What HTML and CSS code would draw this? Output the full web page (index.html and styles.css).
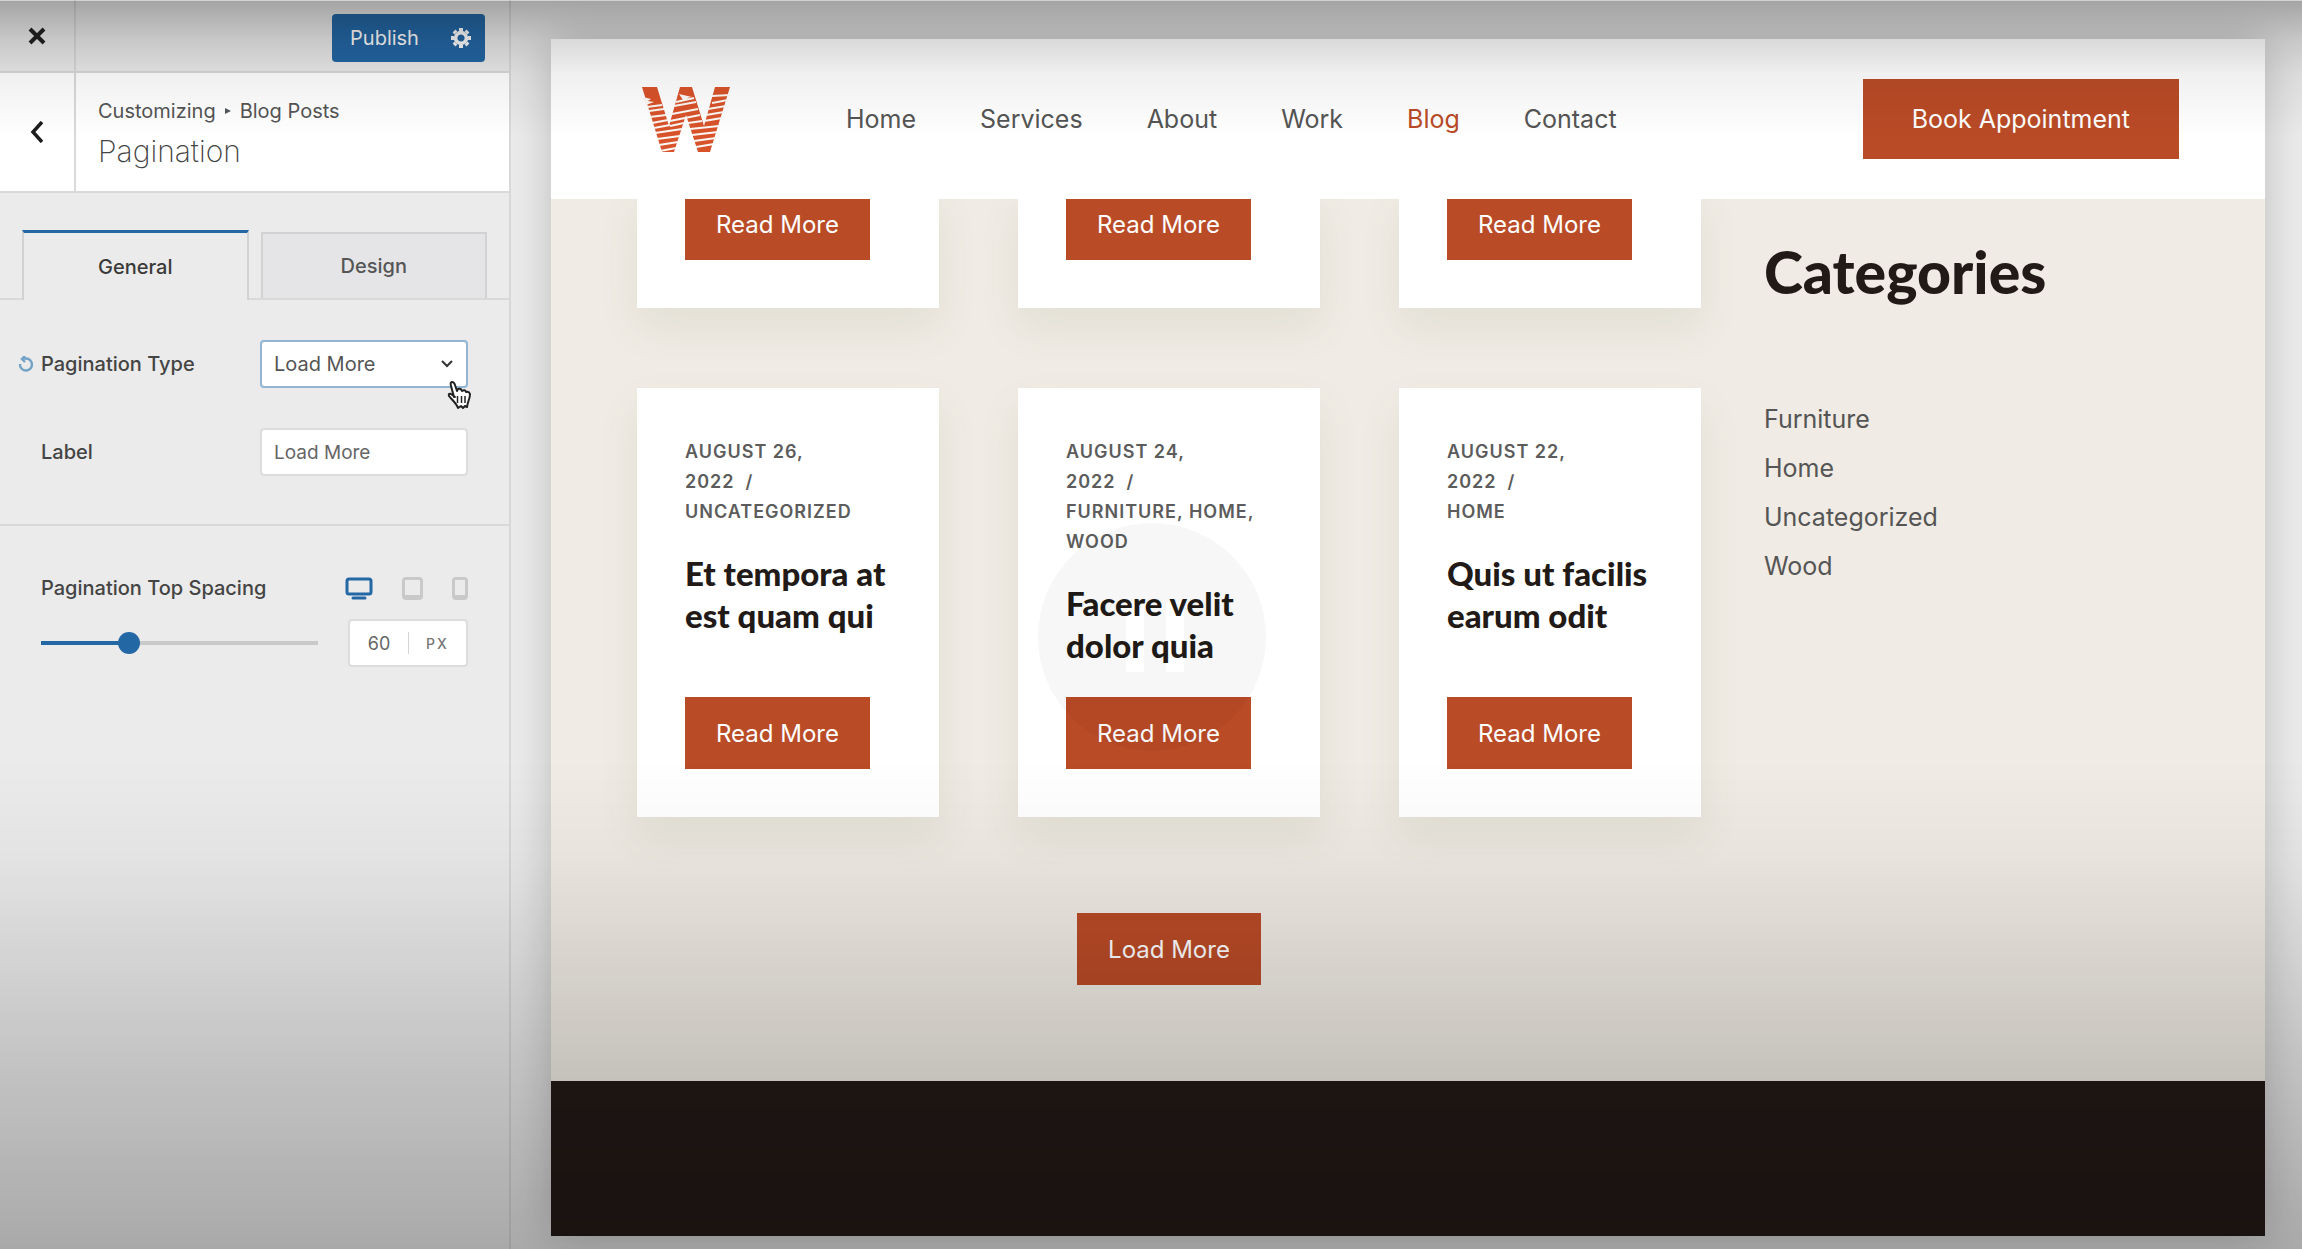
FILE: index.html
```
<!DOCTYPE html>
<html lang="en">
<head>
  <meta charset="UTF-8">
  <title>Customizer - Pagination</title>
  <link rel="stylesheet" href="styles.css">
</head>
<body>

  <aside class="customizer">
    <div class="topbar">
      <button class="icon-cell" aria-label="Close">
        <svg width="18" height="18" viewBox="0 0 18 18"><path d="M2 2l14 14M16 2L2 16" stroke="#222" stroke-width="4" fill="none"/></svg>
      </button>
      <div class="actions">
        <button class="publish">Publish</button>
        <button class="settings" aria-label="Publish settings">
          <svg width="20" height="20" viewBox="-10 -10 20 20" fill="none" stroke="#fff">
            <circle r="5.4" stroke-width="3.6"/>
            <path d="M0-7V-10M0 7V10M-7 0H-10M7 0H10M5 5L7 7M-5-5L-7-7M5-5L7-7M-5 5L-7 7" stroke-width="4"/>
          </svg>
        </button>
      </div>
    </div>

    <div class="section-head">
      <button class="icon-cell" aria-label="Back">
        <svg width="14" height="22" viewBox="0 0 14 22"><path d="M12 1L3 11l9 10" stroke="#1d1d1d" stroke-width="3.500" fill="none"/></svg>
      </button>
      <div class="section-title">
        <span class="crumbs">Customizing <svg width="6" height="8" viewBox="0 0 6 8"><path d="M0 1l6 3-6 3z" fill="#50575e"/></svg> Blog Posts</span>
        <h1>Pagination</h1>
      </div>
    </div>

    <div class="tabs">
      <button class="tab active">General</button>
      <button class="tab">Design</button>
    </div>

    <div class="controls">
      <div class="row">
        <button class="reset" aria-label="Reset">
          <svg width="16" height="16" viewBox="0 0 16 16" fill="none" stroke="#72a3c6" stroke-width="2.4"><path d="M2 8a6 6 0 1 0 6-5.500H5"/><path d="M7 0L4 3l3 3"/></svg>
        </button>
        <label for="type">Pagination Type</label>
        <div class="select-wrap">
          <select id="type" class="field focused"><option>Load More</option></select>
          <svg class="chevron" width="12" height="8" viewBox="0 0 12 8"><path d="M1 1l5 5 5-5" stroke="#333" stroke-width="2" fill="none"/></svg>
          <svg class="cursor" width="26" height="29" viewBox="0 0 26 29">
            <path d="M9 16L6 5Q5 1 7 1t3 3l2 6 1-2q3-1 4 2 3-2 4 1 3-1 4 2c0 5-2 6-3 13l-2-1-2 2-2-2-3 2c-1-4-5-7-9-12q-1-3 2-2l4 3z" fill="#fff" stroke="#222" stroke-width="2" stroke-linejoin="round"/>
            <path d="M12.500 15v7M16.500 15v7M20 15v7" stroke="#222" stroke-width="1.500"/>
          </svg>
        </div>
      </div>
      <div class="row">
        <label for="label">Label</label>
        <input id="label" class="field" type="text" value="Load More">
      </div>
    </div>

    <div class="controls spacing">
      <div class="spacing-head">
        <label for="spacing">Pagination Top Spacing</label>
        <div class="devices">
          <button class="on" aria-label="Desktop"><svg width="28" height="23" viewBox="0 0 28 23" fill="none" stroke="currentColor" stroke-width="3"><rect x="2" y="2" width="24" height="15" rx="2"/><path d="M8 21H20" stroke-linecap="round"/></svg></button>
          <button aria-label="Tablet"><svg width="21" height="23" viewBox="0 0 21 23"><path d="M4 0H17Q21 0 21 4V19Q21 23 17 23H4Q0 23 0 19V4Q0 0 4 0zM3 3V18H18V3z" fill="currentColor" fill-rule="evenodd"/></svg></button>
          <button aria-label="Mobile"><svg width="16" height="23" viewBox="0 0 16 23"><path d="M4 0H12Q16 0 16 4V19Q16 23 12 23H4Q0 23 0 19V4Q0 0 4 0zM3 3V18H13V3z" fill="currentColor" fill-rule="evenodd"/></svg></button>
        </div>
      </div>
      <div class="spacing-body">
        <input id="spacing" class="slider" type="range" min="0" max="200" value="60">
        <div class="number">
          <input type="text" value="60" aria-label="Spacing value">
          <span>PX</span>
        </div>
      </div>
    </div>
  </aside>

  <div class="preview">
    <div class="site">
      <header class="site-header">
        <a class="logo" href="#" aria-label="Home page">
          <svg width="88" height="65" viewBox="0 0 88 65">
            <path d="M0 0H15L27 39 38 0H50L62 39 73 0H88L68 65H56L44 28 32 65H20z" fill="#d9532a"/>
            <g stroke="#fcf8f5" fill="none" stroke-width="2">
              <path d="M5 20L20 18M7 24L22 22M8 30L24 28M10 36L26 33M12 41L28 38M13 46L40 42M15 52L38 49M17 58L36 55M18 64L34 61"/>
              <path d="M34 15L52 11M32 19L54 15M30 27L56 22M28 34L58 28M28 39L42 36M46 36L60 34M48 42L77 39M50 48L76 45M52 54L74 51M54 60L72 57"/>
              <path d="M70 9L88 8M70 16L86 13M66 22L84 19M64 28L82 25M62 34L80 31"/>
            </g>
            <path d="M1 10l8 2-3 2 6 1-8 3zM37 7l13 3-5 1 4 2-8 0z" fill="#fcf8f5"/>
          </svg>
        </a>
        <nav class="menu">
          <a href="#">Home</a>
          <a href="#">Services</a>
          <a href="#">About</a>
          <a href="#">Work</a>
          <a href="#" class="current">Blog</a>
          <a href="#">Contact</a>
        </nav>
        <button class="btn book">Book Appointment</button>
      </header>

      <main class="content">
        <section class="posts">
          <div class="grid">
            <article class="card card-cut"><a class="btn" href="#">Read More</a></article>
            <article class="card card-cut"><a class="btn" href="#">Read More</a></article>
            <article class="card card-cut"><a class="btn" href="#">Read More</a></article>

            <article class="card">
              <p class="meta">August 26,<br>2022 &nbsp;/<br>Uncategorized</p>
              <h3>Et tempora at<br>est quam qui</h3>
              <a class="btn" href="#">Read More</a>
            </article>
            <article class="card">
              <p class="meta">August 24,<br>2022 &nbsp;/<br>Furniture, Home,<br>Wood</p>
              <h3>Facere velit<br>dolor quia</h3>
              <a class="btn" href="#">Read More</a>
              <svg class="pause" width="228" height="228" viewBox="0 0 228 228">
                <path d="M114 0a114 114 0 0 1 0 228a114 114 0 0 1 0-228zM88 79V149H106V79zM128 79V149H146V79z" fill-rule="evenodd" fill="#000" fill-opacity=".032"/>
              </svg>
            </article>
            <article class="card">
              <p class="meta">August 22,<br>2022 &nbsp;/<br>Home</p>
              <h3>Quis ut facilis<br>earum odit</h3>
              <a class="btn" href="#">Read More</a>
            </article>
          </div>
          <button class="btn load-more">Load More</button>
        </section>

        <aside class="widget">
          <h2>Categories</h2>
          <ul>
            <li><a href="#">Furniture</a></li>
            <li><a href="#">Home</a></li>
            <li><a href="#">Uncategorized</a></li>
            <li><a href="#">Wood</a></li>
          </ul>
        </aside>
      </main>

      <footer class="site-footer"></footer>
    </div>
  </div>

</body>
</html>
```
FILE: styles.css
```
* {
  margin: 0;
  padding: 0;
  box-sizing: border-box;
}

body {
  display: flex;
  height: 100vh;
  overflow: hidden;
  background: #ebebec;
  font-family: Inter, "Liberation Sans", sans-serif;
  font-size: 24px;
  color: #555;
}

/* player shade over the top and bottom of the page */
body::before,
body::after {
  content: "";
  position: fixed;
  left: 0;
  right: 0;
  z-index: 10;
  pointer-events: none;
}

body::before {
  top: 0;
  height: 136px;
  border-top: 1px solid rgba(0, 0, 0, 0.1);
  background: linear-gradient(rgba(0, 0, 0, 0.3), rgba(0, 0, 0, 0.14) 30%, rgba(0, 0, 0, 0.06) 54%, transparent);
}

body::after {
  bottom: 0;
  height: 489px;
  background: linear-gradient(transparent, rgba(0, 0, 0, 0.03) 20%, rgba(0, 0, 0, 0.16) 60%, rgba(0, 0, 0, 0.28));
}

a {
  color: inherit;
  text-decoration: none;
}

button {
  border: none;
  background: none;
  font: inherit;
  color: inherit;
  cursor: pointer;
}

svg {
  display: block;
}

/* customizer panel */
.customizer {
  flex: 0 0 511px;
  border-right: 2px solid #d9d9da;
  background: #ebebeb;
  font-size: 20px;
}

.topbar,
.section-head {
  display: flex;
  border-bottom: 2px solid #d9d9d9;
}

.topbar {
  height: 73px;
}

.section-head {
  height: 120px;
  background: #fff;
}

.icon-cell {
  flex: 0 0 76px;
  display: flex;
  align-items: center;
  justify-content: center;
  border-right: 2px solid #d9d9d9;
}

.actions {
  display: flex;
  align-items: center;
  width: 153px;
  height: 48px;
  margin: 14px 24px 0 auto;
  border-radius: 4px;
  background: #2467a5;
  color: #fff;
}

.publish {
  flex: 1;
  height: 100%;
}

.settings {
  flex: 0 0 48px;
  display: flex;
  justify-content: center;
}

.section-title {
  padding: 25px 22px;
}

.crumbs {
  display: flex;
  align-items: center;
  gap: 9px;
  height: 26px;
}

.section-title h1 {
  font-size: 30px;
  font-weight: 200;
  line-height: 54px;
  color: #444;
}

.tabs {
  display: flex;
  align-items: flex-end;
  gap: 12px;
  height: 107px;
  padding: 0 22px;
  border-bottom: 2px solid #d9d9d9;
}

.tab {
  flex: 1;
  height: 66px;
  border: 2px solid #d2d2d3;
  border-bottom: none;
  background: #e5e5e8;
  font-size: 20px;
  font-weight: 500;
}

.tab.active {
  height: 70px;
  margin-bottom: -2px;
  border-top: 3px solid #2467a5;
  background: #ebebeb;
  color: #3a3a3a;
}

.controls {
  display: flex;
  flex-direction: column;
  gap: 40px;
  padding: 40px 41px 48px;
  border-bottom: 2px solid #d9d9d9;
}

.controls label {
  flex: 1;
  font-size: 20px;
  font-weight: 500;
  color: #444;
}

.row {
  position: relative;
  display: flex;
  align-items: center;
}

.reset {
  position: absolute;
  left: -23px;
}

.select-wrap {
  position: relative;
}

.field {
  display: block;
  width: 208px;
  height: 48px;
  padding: 0 12px;
  border: 2px solid #dcdcdc;
  border-radius: 4px;
  background: #fff;
  font: inherit;
  font-size: 19px;
  color: #666;
  appearance: none;
}

.focused {
  border-color: #93b5d3;
  font-size: 20px;
  color: #555;
}

.chevron {
  position: absolute;
  right: 15px;
  top: 20px;
}

.cursor {
  position: absolute;
  right: -3px;
  top: 41px;
}

.spacing {
  gap: 19px;
  padding-top: 50px;
  border-bottom: none;
}

.spacing-head,
.spacing-body,
.devices {
  display: flex;
  align-items: center;
}

.devices {
  gap: 29px;
  color: #c9c9c9;
}

.devices .on {
  color: #2467a5;
}

.spacing-body {
  justify-content: space-between;
}

.slider {
  width: 277px;
  height: 22px;
  background: linear-gradient(to right, #2467a5 31%, #c9c9c9 31%) center / 100% 4px no-repeat;
  appearance: none;
}

.slider::-webkit-slider-thumb {
  width: 22px;
  height: 22px;
  border-radius: 50%;
  background: #2467a5;
  appearance: none;
}

.number {
  display: flex;
  align-items: center;
  width: 120px;
  height: 48px;
  border: 2px solid #dcdcdc;
  border-radius: 4px;
  background: #fff;
}

.number input {
  width: 59px;
  height: 22px;
  border: none;
  border-right: 1px solid #d5d5d5;
  background: none;
  font: inherit;
  font-size: 18px;
  text-align: center;
  color: #666;
}

.number span {
  flex: 1;
  font-size: 14px;
  font-weight: 500;
  letter-spacing: 2px;
  text-align: center;
  color: #777;
}

/* site preview */
.preview {
  flex: 1;
  display: flex;
  padding: 39px 37px 13px 40px;
}

.site {
  flex: 1;
  display: flex;
  flex-direction: column;
  background: #f0ebe4;
  box-shadow: 0 0 40px rgba(0, 0, 0, 0.2);
}

.site-header {
  display: flex;
  align-items: center;
  height: 160px;
  padding: 0 86px 0 91px;
  background: #fff;
}

.menu {
  display: flex;
  gap: 64px;
  margin-left: 116px;
  font-size: 25px;
}

.current {
  color: #ba4b27;
}

.btn {
  display: inline-flex;
  align-items: center;
  justify-content: center;
  height: 72px;
  padding: 0 31px;
  background: #ba4b27;
  font-size: 24px;
  color: #fff;
}

.book {
  height: 80px;
  margin-left: auto;
  padding: 0 49px;
  font-size: 25px;
}

.content {
  display: flex;
  padding: 0 86px;
  overflow: hidden;
}

.posts {
  flex: 0 0 69%;
  display: flex;
  flex-direction: column;
  align-items: center;
  gap: 96px;
  margin-top: -11px;
  padding-bottom: 96px;
}

.grid {
  display: grid;
  grid-template-columns: repeat(3, 1fr);
  gap: 80px 79px;
  width: 100%;
}

.card {
  position: relative;
  display: flex;
  flex-direction: column;
  align-items: flex-start;
  padding: 49px 48px 48px;
  background: #fff;
  box-shadow: 0 20px 40px rgba(90, 110, 70, 0.09);
}

.card-cut {
  padding-top: 0;
}

.card .btn {
  margin-top: auto;
}

.meta {
  font-size: 18px;
  font-weight: 600;
  line-height: 30px;
  letter-spacing: 1px;
  text-transform: uppercase;
  white-space: nowrap;
  color: #5c5c5c;
}

.card h3 {
  margin: 25px 0 31px;
  font-family: Lato, Inter, sans-serif;
  font-size: 33px;
  font-weight: 900;
  line-height: 42px;
  color: #211a17;
  white-space: nowrap;
}

/* player pause indicator, floats over the card */
.pause {
  position: absolute;
  left: 20px;
  top: 135px;
}

.widget {
  padding: 39px 0 0 63px;
}

.widget h2 {
  font-family: Lato, Inter, sans-serif;
  font-size: 59px;
  font-weight: 900;
  line-height: 68px;
  color: #211a17;
}

.widget ul {
  margin-top: 89px;
  font-size: 25px;
  line-height: 49px;
  list-style: none;
}

.site-footer {
  flex: 1;
  background: #241a17;
}
```
